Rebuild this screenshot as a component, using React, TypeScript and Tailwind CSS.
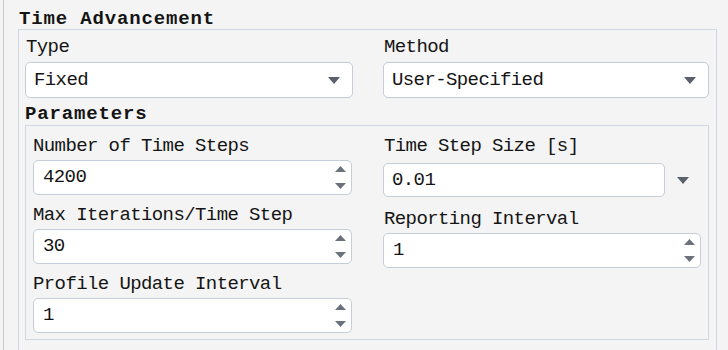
const FONT = { fontFamily: '"Liberation Mono", "DejaVu Sans Mono", monospace' };

function DropArrow() {
  return (
    <svg width="12" height="7" viewBox="0 0 12 7">
      <polygon points="0,0 12,0 6,7" fill="#58616c" />
    </svg>
  );
}

function SpinArrows() {
  return (
    <div className="flex h-full flex-col justify-between py-[5px]">
      <svg width="11" height="6" viewBox="0 0 11 6">
        <polygon points="0,6 11,6 5.5,0" fill="#6b727c" />
      </svg>
      <svg width="11" height="6" viewBox="0 0 11 6">
        <polygon points="0,0 11,0 5.5,6" fill="#6b727c" />
      </svg>
    </div>
  );
}

function Combo({ value }: { value: string }) {
  return (
    <div className="mt-[3px] flex h-[36px] items-center justify-between rounded-[5px] border border-[#c6cdd8] bg-white pl-[8px] pr-[12px]">
      <span>{value}</span>
      <DropArrow />
    </div>
  );
}

function Spin({ value }: { value: string }) {
  return (
    <div className="mt-[2px] flex h-[35px] items-center justify-between rounded-[5px] border border-[#c6cdd8] bg-white pl-[9px] pr-[5px]">
      <span>{value}</span>
      <SpinArrows />
    </div>
  );
}

function Label({ text }: { text: string }) {
  return <div className="h-[24px] leading-[25px] whitespace-nowrap">{text}</div>;
}

export default function App() {
  return (
    <div
      className="flex h-[350px] w-[728px] overflow-hidden bg-[#f4f4f4] text-[19px] tracking-[-0.6px] text-[#141414]"
      style={FONT}
    >
      <div className="ml-[3px] flex flex-1 flex-col border-l border-[#c9c9c9] pl-[14px] pt-[8px]">
        <div className="h-[21px] pl-[1px] font-bold leading-[22px] tracking-[0.85px]">
          Time Advancement
        </div>
        <div className="w-[699px] border border-[#d2d8e2] pl-[6px] pr-[7px] pt-[5px] pb-[30px]">
          <div className="flex gap-[30px]">
            <div className="w-[328px]">
              <div className="pl-[1px]">
                <Label text="Type" />
              </div>
              <Combo value="Fixed" />
            </div>
            <div className="w-[326px]">
              <div className="pl-[1px]">
                <Label text="Method" />
              </div>
              <Combo value="User-Specified" />
            </div>
          </div>

          <div className="mt-[5px] h-[22px] font-bold leading-[23px] tracking-[0.85px]">
            Parameters
          </div>
          <div className="flex gap-[31px] border border-[#d2d8e2] pl-[7px] pr-[6px] pt-[8px] pb-[6px]">
            <div className="w-[319px]">
              <Label text="Number of Time Steps" />
              <Spin value="4200" />
              <div className="mt-[8px]">
                <Label text="Max Iterations/Time Step" />
              </div>
              <Spin value="30" />
              <div className="mt-[8px]">
                <Label text="Profile Update Interval" />
              </div>
              <Spin value="1" />
            </div>
            <div className="w-[318px]">
              <div className="pl-[1px]">
                <Label text="Time Step Size [s]" />
              </div>
              <div className="mt-[5px] flex items-center">
                <div className="flex h-[34px] flex-1 items-center rounded-[5px] border border-[#c6cdd8] bg-white pl-[8px]">
                  0.01
                </div>
                <div className="flex w-[36px] justify-center">
                  <DropArrow />
                </div>
              </div>
              <div className="mt-[10px] pl-[1px]">
                <Label text="Reporting Interval" />
              </div>
              <Spin value="1" />
            </div>
          </div>
        </div>
      </div>
    </div>
  );
}
